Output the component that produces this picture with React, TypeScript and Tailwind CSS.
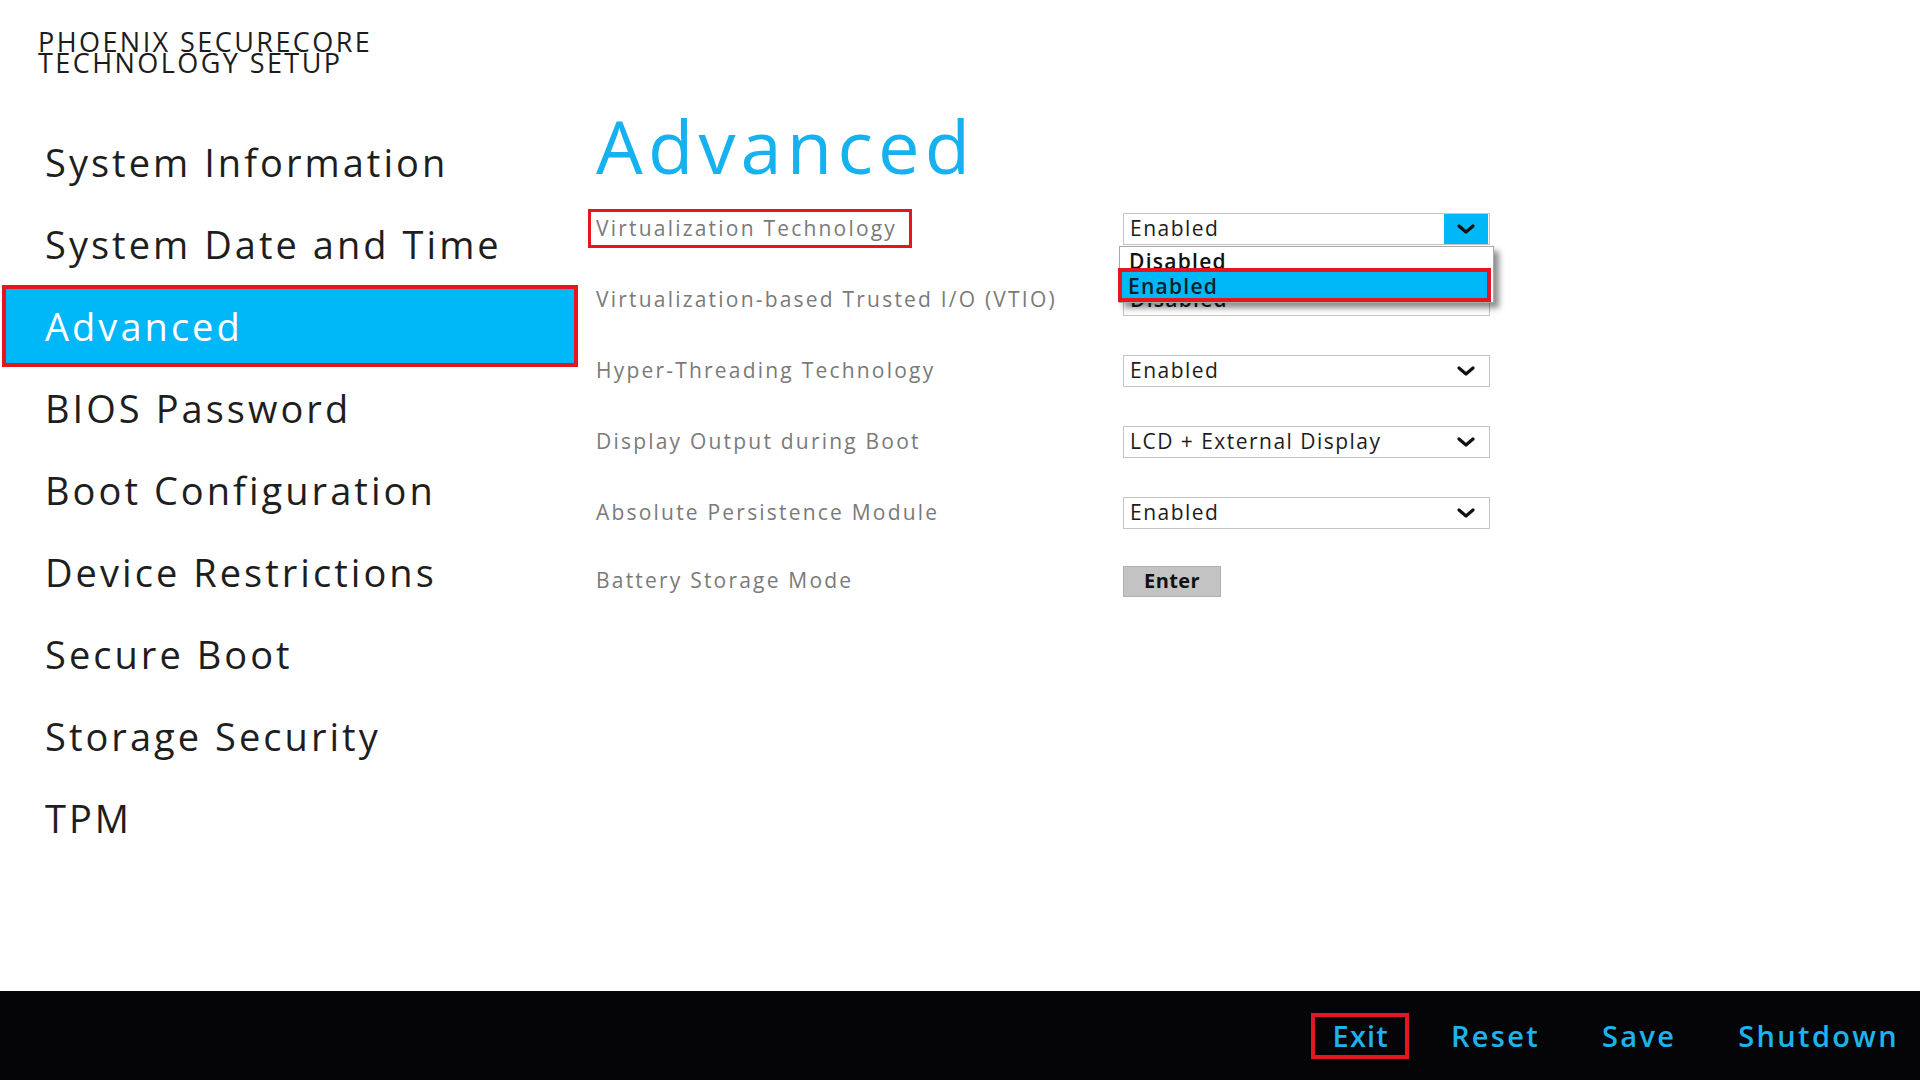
import React from "react";

const font = { fontFamily: '"Open Sans", "Noto Sans", sans-serif' };

const menu = [
  "System Information",
  "System Date and Time",
  "Advanced",
  "BIOS Password",
  "Boot Configuration",
  "Device Restrictions",
  "Secure Boot",
  "Storage Security",
  "TPM",
];

function Chevron() {
  return (
    <svg width="18" height="10" viewBox="0 0 18 10" fill="none" aria-hidden="true">
      <path d="M2 2L9 8L16 2" stroke="#111" strokeWidth="3.2" strokeLinecap="round" strokeLinejoin="round" />
    </svg>
  );
}

function Select({ value, open }: { value: string; open?: boolean }) {
  return (
    <div className="flex h-[32px] w-[367px] items-center justify-between border border-[#c4c4c4] bg-white">
      <span className="pl-[6px] text-[21px] tracking-[0.07em] text-[#1c1c1c]">{value}</span>
      {open ? (
        <span className="mr-[1px] flex h-[30px] w-[44px] items-center justify-center bg-[#00b7f8]">
          <Chevron />
        </span>
      ) : (
        <span className="mr-[14px] flex items-center">
          <Chevron />
        </span>
      )}
    </div>
  );
}

export default function App() {
  const rows = [
    { label: "Virtualization Technology", value: "Enabled", kind: "open", h: "h-[71px]" },
    { label: "Virtualization-based Trusted I/O (VTIO)", value: "Disabled", kind: "vtio", h: "h-[71px]" },
    { label: "Hyper-Threading Technology", value: "Enabled", kind: "select", h: "h-[71px]" },
    { label: "Display Output during Boot", value: "LCD + External Display", kind: "select", h: "h-[71px]" },
    { label: "Absolute Persistence Module", value: "Enabled", kind: "select", h: "h-[71px]" },
    { label: "Battery Storage Mode", value: "", kind: "button", h: "h-[66px]" },
  ];

  return (
    <div className="flex h-[1080px] w-[1920px] flex-col overflow-hidden bg-white" style={font}>
      <div className="flex-1">
        {/* Title */}
        <div className="px-[38px] pt-[31px] text-[27px] leading-[21px] tracking-[0.09em] text-[#1c1c1c]">
          <div>PHOENIX SECURECORE</div>
          <div>TECHNOLOGY SETUP</div>
        </div>

        <div className="flex">
          {/* Sidebar */}
          <nav className="mt-[48px] w-[578px] pl-[2px]">
            {menu.map((item) =>
              item === "Advanced" ? (
                <div
                  key={item}
                  className="flex h-[82px] items-center border-4 border-[#e5161f] bg-[#00b7f8] pl-[39px] text-[38px] tracking-[0.08em] text-white"
                >
                  {item}
                </div>
              ) : (
                <div key={item} className="flex h-[82px] items-center pl-[43px] text-[38px] tracking-[0.08em] text-[#1e1e1e]">
                  {item}
                </div>
              )
            )}
          </nav>

          {/* Content */}
          <main className="mt-[36px] pl-[18px]">
            <h1 className="text-[74px] leading-[74px] tracking-[0.07em] text-[#16b2ef]">Advanced</h1>
            <div className="mt-[10px]">
              {rows.map((row, i) => (
                <div key={i} className={`relative flex items-center ${row.h}`}>
                  <div className="w-[527px] text-[21px] tracking-[0.105em] text-[#7a7a7a]">
                    {i === 0 ? (
                      <span className="-ml-[8px] inline-flex h-[39px] items-center border-[3px] border-[#e5161f] pl-[5px] pr-[12px]">
                        {row.label}
                      </span>
                    ) : (
                      row.label
                    )}
                  </div>
                  {row.kind === "open" && <Select value={row.value} open />}
                  {row.kind === "select" && <Select value={row.value} />}
                  {row.kind === "vtio" && (
                    <div className="flex h-[33px] w-[367px] items-center border border-[#c4c4c4] bg-white">
                      <span className="pl-[6px] text-[21px] font-semibold tracking-[0.06em] text-[#1c1c1c]">{row.value}</span>
                    </div>
                  )}
                  {row.kind === "button" && (
                    <button className="flex h-[31px] w-[98px] items-center justify-center border border-[#b0b0b0] bg-[#c3c3c3] text-[20px] font-bold tracking-[0.02em] text-[#111]">
                      Enter
                    </button>
                  )}

                  {row.kind === "open" && (
                    <div className="absolute left-[523px] top-[53px] z-10 h-[57px] w-[375px] overflow-hidden border border-[#a9a9a9] bg-white shadow-[5px_5px_6px_rgba(0,0,0,0.45)]">
                      <div className="flex h-[26px] items-center pl-[9px] pt-[3px] text-[21px] font-semibold tracking-[0.06em] text-[#111]">
                        Disabled
                      </div>
                    </div>
                  )}
                  {row.kind === "open" && (
                    <div className="absolute left-[522px] top-[75px] z-20 flex h-[34px] w-[373px] items-center border-4 border-[#e5161f] bg-[#00b7f8] pl-[6px] pt-[3px] text-[21px] font-semibold tracking-[0.06em] text-[#0d1f2c]">
                      Enabled
                    </div>
                  )}
                </div>
              ))}
            </div>
          </main>
        </div>
      </div>

      {/* Footer */}
      <footer className="flex h-[89px] items-center justify-end gap-[62px] bg-[#050508] pr-[21px] text-[29px] font-semibold tracking-[0.08em] text-[#1cb4ee]">
        <span className="-ml-[22px] -mr-[20px] flex h-[46px] items-center border-4 border-[#e5161f] pl-[18px] pr-[16px] tracking-[0.04em]">Exit</span>
        <span>Reset</span>
        <span>Save</span>
        <span>Shutdown</span>
      </footer>
    </div>
  );
}
